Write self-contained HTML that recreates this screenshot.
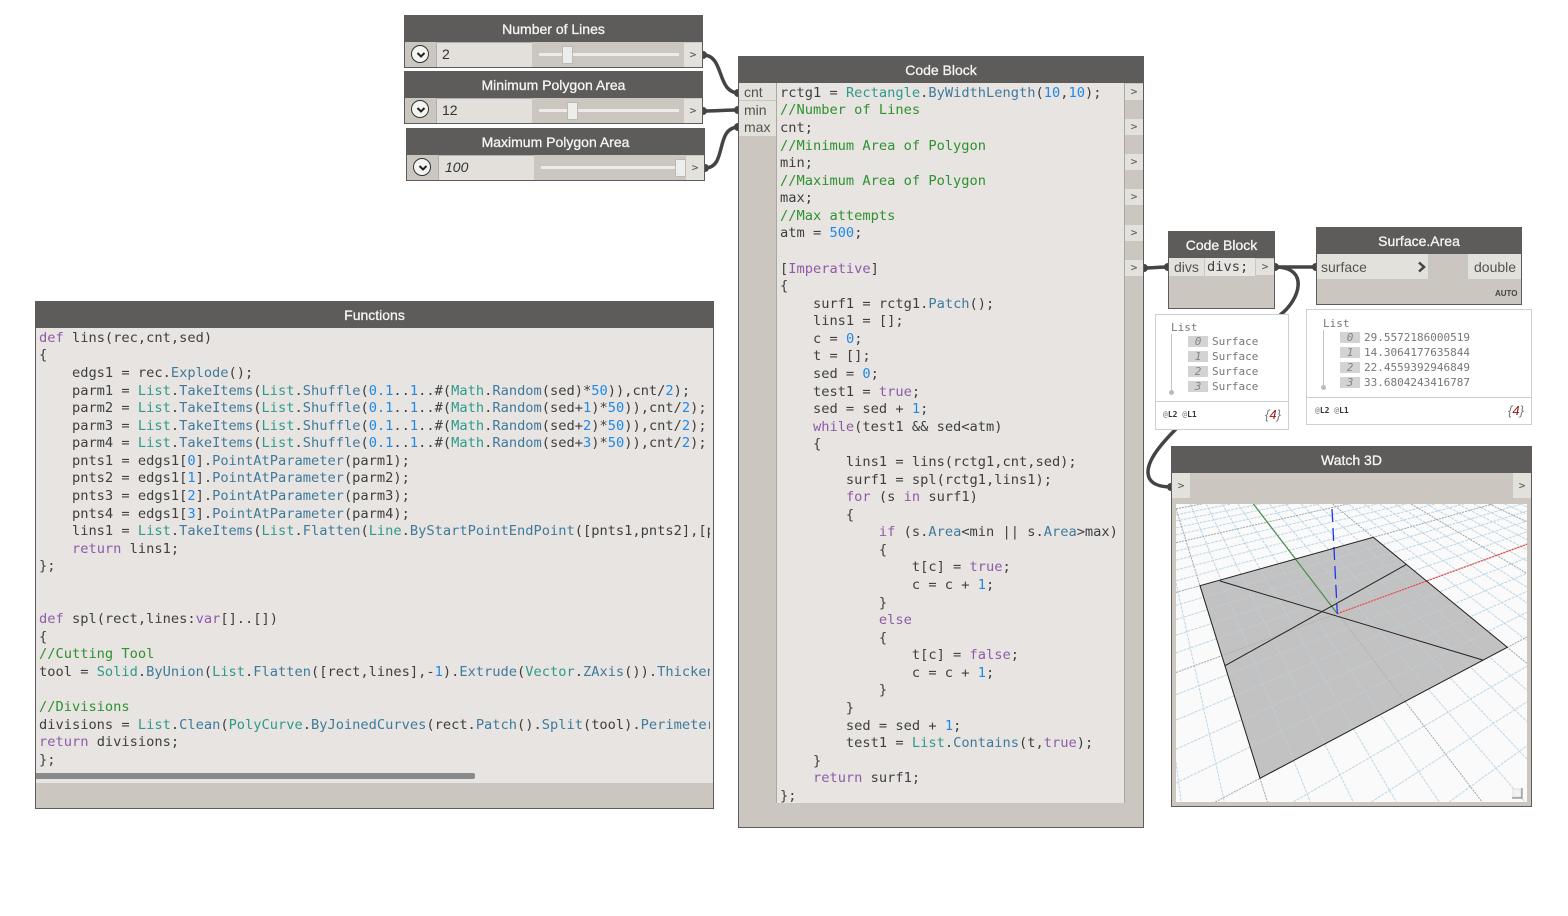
<!DOCTYPE html>
<html><head><meta charset="utf-8"><style>
html,body{margin:0;padding:0;background:#fff;width:1568px;height:916px;overflow:hidden}
body{position:relative;font-family:"Liberation Sans",sans-serif}
.a{position:absolute;box-sizing:border-box}
.node{background:#cbc7c0;border:1px solid #5e5c5a}
.hd{position:absolute;background:#5e5c5a;color:#f5f5f3;font-size:14px;text-align:center;-webkit-text-stroke:.3px #f5f5f3;line-height:29px;height:27px;overflow:hidden}
.p{position:absolute;background:#e3e1dc;color:#55534f;font-size:14px;line-height:17px;box-sizing:border-box}
.g{position:absolute;background:#e3e1dc;color:#55534f;font:11px "DejaVu Sans Mono",monospace;text-align:center;height:16px;line-height:16px;width:18px}
pre{position:absolute;margin:0;font:13.7px/17.58px "DejaVu Sans Mono",monospace;color:#3f3f3f;overflow:hidden;white-space:pre}
i{font-style:normal}
.k{color:#8f5ba8}.t{color:#2e9a8c}.m{color:#3f7a9c}.n{color:#1f88e8}.c{color:#2f9130}
.w{background:#fff;border:1px solid #cfcfcf}
.l{position:absolute;font:11px "DejaVu Sans Mono",monospace;color:#777;line-height:14px;white-space:nowrap}
.ix{position:absolute;background:#d3d3d3;width:20px;height:11px;font:italic 11px/11px "DejaVu Sans Mono",monospace;color:#858585;text-align:center}
.bold{position:absolute;font:bold 8px "DejaVu Sans Mono",monospace;color:#333;white-space:nowrap}
.four{position:absolute;font:italic 13px "Liberation Sans",sans-serif;color:#777}.four b{color:#a01515;font-weight:normal}
.circ{position:absolute;width:18px;height:18px;border:1.5px solid #333;border-radius:50%;background:#f4f4f2;box-sizing:border-box}
.track{position:absolute;height:3px;background:#ecebe8}
.th{position:absolute;width:11px;height:18px;background:#ededeb;border:1px solid #bdbab4;box-sizing:border-box}
.inp{position:absolute;background:#e3e0db;border-top:1px solid #aeb0b4;border-left:1px solid #aeb0b4;box-sizing:border-box;font-size:14px;color:#333;line-height:22px;padding-left:5px}
</style></head><body>

<svg class="a" style="left:0;top:0" width="1568" height="916" fill="none" stroke="#444" stroke-width="3.500">
<path d="M703 55C725 55 716 93 739 93"/>
<path d="M703 111C716 111 726 110 739 110"/>
<path d="M705 168C728 168 714 127 739 127"/>
<path d="M1144 268C1152 268 1160 267 1168 267"/>
<path d="M1275 267L1316 267"/>
<path d="M1275 267C1310 267 1300 300 1280 315"/>
<path d="M1176 429C1160 445 1148 460 1148 472C1148 484 1160 487 1171 487"/>
<g fill="#444" stroke="none">
<circle cx="703" cy="55" r="4"/><circle cx="703" cy="111" r="4"/><circle cx="705" cy="168" r="4"/>
<circle cx="738" cy="93" r="4"/><circle cx="738" cy="110" r="4"/><circle cx="738" cy="127" r="4"/>
<circle cx="1144" cy="268" r="4"/><circle cx="1168" cy="267" r="4"/><circle cx="1275" cy="267" r="4"/><circle cx="1316" cy="267" r="4"/><circle cx="1171" cy="487" r="4"/>
</g></svg>

<!-- sliders -->
<div class="a node" style="left:404px;top:15px;width:299px;height:53px"></div>
<div class="hd" style="left:404px;top:15px;width:299px">Number of Lines</div>
<div class="circ" style="left:411px;top:45px"></div>
<svg class="a" style="left:416px;top:51px" width="10" height="8" fill="none" stroke="#222" stroke-width="2"><path d="M1.500 2L5 5.500L8.500 2"/></svg>
<div class="inp" style="left:436px;top:42px;width:96px;height:25px">2</div>
<div class="track" style="left:539px;top:53px;width:140px"></div>
<div class="th" style="left:562px;top:46px"></div>
<div class="p" style="left:684px;top:43px;width:18px;height:24px;text-align:center;font:11px/24px 'DejaVu Sans Mono',monospace">&gt;</div>

<div class="a node" style="left:404px;top:71px;width:299px;height:53px"></div>
<div class="hd" style="left:404px;top:71px;width:299px">Minimum Polygon Area</div>
<div class="circ" style="left:411px;top:100px"></div>
<svg class="a" style="left:416px;top:106px" width="10" height="8" fill="none" stroke="#222" stroke-width="2"><path d="M1.500 2L5 5.500L8.500 2"/></svg>
<div class="inp" style="left:436px;top:98px;width:96px;height:25px">12</div>
<div class="track" style="left:539px;top:109px;width:140px"></div>
<div class="th" style="left:567px;top:102px"></div>
<div class="p" style="left:684px;top:99px;width:18px;height:24px;text-align:center;font:11px/24px 'DejaVu Sans Mono',monospace">&gt;</div>

<div class="a node" style="left:406px;top:128px;width:299px;height:53px"></div>
<div class="hd" style="left:406px;top:128px;width:299px">Maximum Polygon Area</div>
<div class="circ" style="left:413px;top:158px"></div>
<svg class="a" style="left:418px;top:164px" width="10" height="8" fill="none" stroke="#222" stroke-width="2"><path d="M1.500 2L5 5.500L8.500 2"/></svg>
<div class="inp" style="left:438px;top:155px;width:96px;height:25px;font-style:italic;padding-left:6px">100</div>
<div class="track" style="left:541px;top:166px;width:140px"></div>
<div class="th" style="left:675px;top:159px"></div>
<div class="p" style="left:686px;top:156px;width:18px;height:24px;text-align:center;font:11px/24px 'DejaVu Sans Mono',monospace">&gt;</div>

<!-- main code block -->
<div class="a node" style="left:738px;top:56px;width:406px;height:772px"></div>
<div class="hd" style="left:738px;top:56px;width:406px">Code Block</div>
<div class="a" style="left:776px;top:83px;width:349px;height:720px;background:#e7e4e1;border-left:1px solid #aaa8a3;border-right:1px solid #aaa8a3"></div>
<div class="p" style="left:739px;top:83px;width:37px;height:18px;padding-left:5px;line-height:19px;border-bottom:1px solid #cbc7c0">cnt</div>
<div class="p" style="left:739px;top:101px;width:37px;height:18px;padding-left:5px;line-height:19px">min</div>
<div class="p" style="left:739px;top:119px;width:37px;height:17px;padding-left:5px;line-height:17px">max</div>
<div class="g" style="left:1125px;top:84px">&gt;</div>
<div class="g" style="left:1125px;top:119px">&gt;</div>
<div class="g" style="left:1125px;top:154px">&gt;</div>
<div class="g" style="left:1125px;top:189px">&gt;</div>
<div class="g" style="left:1125px;top:225px">&gt;</div>
<div class="g" style="left:1125px;top:260px">&gt;</div>
<pre style="left:780px;top:84.800px;width:344px;height:718px">rctg1 = <i class="t">Rectangle</i>.<i class="m">ByWidthLength</i>(<i class="n">10</i>,<i class="n">10</i>);
<i class="c">//Number of Lines</i>
cnt;
<i class="c">//Minimum Area of Polygon</i>
min;
<i class="c">//Maximum Area of Polygon</i>
max;
<i class="c">//Max attempts</i>
atm = <i class="n">500</i>;

[<i class="k">Imperative</i>]
{
    surf1 = rctg1.<i class="m">Patch</i>();
    lins1 = [];
    c = <i class="n">0</i>;
    t = [];
    sed = <i class="n">0</i>;
    test1 = <i class="k">true</i>;
    sed = sed + <i class="n">1</i>;
    <i class="k">while</i>(test1 &amp;&amp; sed&lt;atm)
    {
        lins1 = lins(rctg1,cnt,sed);
        surf1 = spl(rctg1,lins1);
        <i class="k">for</i> (s <i class="k">in</i> surf1)
        {
            <i class="k">if</i> (s.<i class="m">Area</i>&lt;min || s.<i class="m">Area</i>&gt;max)
            {
                t[c] = <i class="k">true</i>;
                c = c + <i class="n">1</i>;
            }
            <i class="k">else</i>
            {
                t[c] = <i class="k">false</i>;
                c = c + <i class="n">1</i>;
            }
        }
        sed = sed + <i class="n">1</i>;
        test1 = <i class="t">List</i>.<i class="m">Contains</i>(t,<i class="k">true</i>);
    }
    <i class="k">return</i> surf1;
};</pre>

<!-- functions -->
<div class="a node" style="left:35px;top:301px;width:679px;height:508px"></div>
<div class="hd" style="left:35px;top:301px;width:679px">Functions</div>
<div class="a" style="left:36px;top:328px;width:677px;height:455px;background:#e7e4e1"></div>
<pre style="left:39px;top:329.800px;width:671px;height:443px">
<i class="k">def</i> lins(rec,cnt,sed)
{
    edgs1 = rec.<i class="m">Explode</i>();
    parm1 = <i class="t">List</i>.<i class="m">TakeItems</i>(<i class="t">List</i>.<i class="m">Shuffle</i>(<i class="n">0.1</i>..<i class="n">1</i>..#(<i class="t">Math</i>.<i class="m">Random</i>(sed)*<i class="n">50</i>)),cnt/<i class="n">2</i>);
    parm2 = <i class="t">List</i>.<i class="m">TakeItems</i>(<i class="t">List</i>.<i class="m">Shuffle</i>(<i class="n">0.1</i>..<i class="n">1</i>..#(<i class="t">Math</i>.<i class="m">Random</i>(sed+<i class="n">1</i>)*<i class="n">50</i>)),cnt/<i class="n">2</i>);
    parm3 = <i class="t">List</i>.<i class="m">TakeItems</i>(<i class="t">List</i>.<i class="m">Shuffle</i>(<i class="n">0.1</i>..<i class="n">1</i>..#(<i class="t">Math</i>.<i class="m">Random</i>(sed+<i class="n">2</i>)*<i class="n">50</i>)),cnt/<i class="n">2</i>);
    parm4 = <i class="t">List</i>.<i class="m">TakeItems</i>(<i class="t">List</i>.<i class="m">Shuffle</i>(<i class="n">0.1</i>..<i class="n">1</i>..#(<i class="t">Math</i>.<i class="m">Random</i>(sed+<i class="n">3</i>)*<i class="n">50</i>)),cnt/<i class="n">2</i>);
    pnts1 = edgs1[<i class="n">0</i>].<i class="m">PointAtParameter</i>(parm1);
    pnts2 = edgs1[<i class="n">1</i>].<i class="m">PointAtParameter</i>(parm2);
    pnts3 = edgs1[<i class="n">2</i>].<i class="m">PointAtParameter</i>(parm3);
    pnts4 = edgs1[<i class="n">3</i>].<i class="m">PointAtParameter</i>(parm4);
    lins1 = <i class="t">List</i>.<i class="m">TakeItems</i>(<i class="t">List</i>.<i class="m">Flatten</i>(<i class="t">Line</i>.<i class="m">ByStartPointEndPoint</i>([pnts1,pnts2],[pnts3,pnts4]),cnt);
    <i class="k">return</i> lins1;
};


<i class="k">def</i> spl(rect,lines:<i class="k">var</i>[]..[])
{
<i class="c">//Cutting Tool</i>
tool = <i class="t">Solid</i>.<i class="m">ByUnion</i>(<i class="t">List</i>.<i class="m">Flatten</i>([rect,lines],-<i class="n">1</i>).<i class="m">Extrude</i>(<i class="t">Vector</i>.<i class="m">ZAxis</i>()).<i class="m">Thicken</i>(<i class="n">0.01</i>));

<i class="c">//Divisions</i>
divisions = <i class="t">List</i>.<i class="m">Clean</i>(<i class="t">PolyCurve</i>.<i class="m">ByJoinedCurves</i>(rect.<i class="m">Patch</i>().<i class="m">Split</i>(tool).<i class="m">PerimeterCurves</i>()),<i class="k">false</i>);
<i class="k">return</i> divisions;
};</pre>
<div class="a" style="left:36px;top:773px;width:439px;height:6px;background:#8a8a8a;border-radius:0 2px 2px 0"></div>

<!-- small code block -->
<div class="a node" style="left:1168px;top:231px;width:107px;height:78px"></div>
<div class="hd" style="left:1168px;top:231px;width:107px">Code Block</div>
<div class="p" style="left:1169px;top:258px;width:35px;height:18px;padding-left:5px;line-height:19px">divs</div>
<pre style="left:1205px;top:258px;width:50px;height:18px;background:#e7e4e1;line-height:18px;padding-left:2px;box-sizing:border-box">divs;</pre>
<div class="g" style="left:1256px;top:259px">&gt;</div>

<!-- surface area -->
<div class="a node" style="left:1316px;top:227px;width:206px;height:78px"></div>
<div class="hd" style="left:1316px;top:227px;width:206px">Surface.Area</div>
<div class="p" style="left:1317px;top:254px;width:111px;height:25px;padding-left:4px;line-height:27px">surface</div>
<svg class="a" style="left:1417px;top:261px" width="10" height="12" fill="none" stroke="#444" stroke-width="2.500"><path d="M2 1.500L7 6L2 10.500"/></svg>
<div class="p" style="left:1468px;top:254px;width:53px;height:25px;padding-left:6px;line-height:27px">double</div>
<div class="a" style="left:1495px;top:289px;font:bold 8px 'Liberation Sans',sans-serif;color:#444">AUTO</div>

<!-- watch 1 -->
<div class="a w" style="left:1155px;top:314px;width:134px;height:116px">
<div class="a" style="left:0;top:86px;width:132px;height:1px;background:#cfcfcf"></div></div>
<div class="l" style="left:1171px;top:321px">List</div>
<div class="a" style="left:1171px;top:334px;width:1px;height:57px;background:#c4c4c4"></div>
<div class="a" style="left:1169px;top:390px;width:5px;height:5px;border-radius:50%;background:#bbb"></div>
<div class="ix" style="left:1188px;top:336px">0</div><div class="l" style="left:1212px;top:335px">Surface</div>
<div class="ix" style="left:1188px;top:351px">1</div><div class="l" style="left:1212px;top:350px">Surface</div>
<div class="ix" style="left:1188px;top:366px">2</div><div class="l" style="left:1212px;top:365px">Surface</div>
<div class="ix" style="left:1188px;top:381px">3</div><div class="l" style="left:1212px;top:380px">Surface</div>
<div class="bold" style="left:1163px;top:410px"><span style="color:#999">@</span>L2 <span style="color:#999">@</span>L1</div>
<div class="four" style="left:1265px;top:407px">{<b>4</b>}</div>

<!-- watch 2 -->
<div class="a w" style="left:1306px;top:309px;width:226px;height:116px">
<div class="a" style="left:0;top:87px;width:224px;height:1px;background:#cfcfcf"></div></div>
<div class="l" style="left:1323px;top:317px">List</div>
<div class="a" style="left:1323px;top:330px;width:1px;height:57px;background:#c4c4c4"></div>
<div class="a" style="left:1321px;top:385px;width:5px;height:5px;border-radius:50%;background:#bbb"></div>
<div class="ix" style="left:1340px;top:332px">0</div><div class="l" style="left:1364px;top:331px">29.5572186000519</div>
<div class="ix" style="left:1340px;top:347px">1</div><div class="l" style="left:1364px;top:346px">14.3064177635844</div>
<div class="ix" style="left:1340px;top:362px">2</div><div class="l" style="left:1364px;top:361px">22.4559392946849</div>
<div class="ix" style="left:1340px;top:377px">3</div><div class="l" style="left:1364px;top:376px">33.6804243416787</div>
<div class="bold" style="left:1315px;top:406px"><span style="color:#999">@</span>L2 <span style="color:#999">@</span>L1</div>
<div class="four" style="left:1508px;top:403px">{<b>4</b>}</div>

<!-- watch 3d -->
<div class="a node" style="left:1171px;top:446px;width:361px;height:361px"></div>
<div class="hd" style="left:1171px;top:446px;width:361px">Watch 3D</div>
<div class="g" style="left:1172px;top:473px;height:25px;line-height:25px">&gt;</div>
<div class="g" style="left:1513px;top:473px;height:25px;line-height:25px">&gt;</div>
<svg class="a" id="v" style="left:1176px;top:504px;background:#fafafa" width="351" height="298" viewBox="1176 504 351 298">
<defs><clipPath id="q"><polygon points="1200,585.700 1373.300,537.300 1507.300,647.300 1260,778.300"/></clipPath></defs>
<g id="gr" fill="none"></g>
<polygon points="1200,585.700 1373.300,537.300 1507.300,647.300 1260,778.300" fill="#c2c2c2"/>
<g id="gr2" fill="none" opacity=".55" clip-path="url(#q)"></g>
<path d="M1337.300 613.700L1527.300 544.300" stroke="#f33" stroke-width="1" stroke-dasharray="2 1" fill="none"/>
<path d="M1337.300 613.700L1253.300 504" stroke="#3a8a3a" stroke-width="1" fill="none"/>
<path d="M1332 509L1337.300 613.700" stroke="#2233ee" stroke-width="1.300" stroke-dasharray="13 6" fill="none"/>
<g fill="none" stroke="#222" stroke-width="1">
<polygon points="1200,585.700 1373.300,537.300 1507.300,647.300 1260,778.300"/>
<path d="M1220 581L1482.700 660"/><path d="M1225 665.700L1406 564.700"/>
</g>
<rect x="1513" y="789" width="8" height="8" fill="#f2f2f2" stroke="#ddd" stroke-width="1"/>
<path d="M1512 798h10v-10" fill="none" stroke="#777" stroke-width="1"/>
</svg>
<script>
(function(){
var P=[[1200,585.7],[1373.3,537.3],[1507.3,647.3],[1260,778.3]];
var x0=P[0][0],y0=P[0][1],x1=P[1][0],y1=P[1][1],x2=P[2][0],y2=P[2][1],x3=P[3][0],y3=P[3][1];
var dx1=x1-x2,dx2=x3-x2,sx=x0-x1+x2-x3,dy1=y1-y2,dy2=y3-y2,sy=y0-y1+y2-y3;
var den=dx1*dy2-dx2*dy1,g=(sx*dy2-dx2*sy)/den,h=(dx1*sy-sx*dy1)/den;
var a=x1-x0+g*x1,b=x3-x0+h*x3,c=x0,d=y1-y0+g*y1,e=y3-y0+h*y3,f=y0;
function m(u,v){var w=g*u+h*v+1;return [(a*u+b*v+c)/w,(d*u+e*v+f)/w];}
var L=1176,R=1527,T=504,B=802;
function seg(A,Q,st){
  var t0=0,t1=1,dx=Q[0]-A[0],dy=Q[1]-A[1];
  var ps=[-dx,dx,-dy,dy],qs=[A[0]-L,R-A[0],A[1]-T,B-A[1]];
  for(var i=0;i<4;i++){
    if(ps[i]==0){if(qs[i]<0)return '';continue;}
    var r=qs[i]/ps[i];
    if(ps[i]<0){if(r>t1)return '';if(r>t0)t0=r;}
    else{if(r<t0)return '';if(r<t1)t1=r;}
  }
  return '<path d="M'+(A[0]+t0*dx).toFixed(1)+' '+(A[1]+t0*dy).toFixed(1)+'L'+(A[0]+t1*dx).toFixed(1)+' '+(A[1]+t1*dy).toFixed(1)+'" '+st+'/>';
}
var s='',W=0.1,minor='stroke="#bcd6e6" stroke-width="1" stroke-dasharray="3 1"',major='stroke="#9aa6ad" stroke-width="1" stroke-dasharray="2 1"';
var lines=[];
for(var i=-30;i<=30;i++){
  var t=i/10,maj=(i%5==0),st=maj?major:minor;
  var vhi=Math.min(4,(1-W+g*t)/(-h)),vlo=-4;
  var uhi=4,ulo=Math.max(-4,(W-1-h*t)/g);
  if(vhi>vlo)lines.push([m(t,vlo),m(t,vhi),st,maj]);
  if(uhi>ulo)lines.push([m(ulo,t),m(uhi,t),st,maj]);
}
lines.sort(function(p,q){return p[3]-q[3];});
lines.forEach(function(l){s+=seg(l[0],l[1],l[2]);});
document.getElementById('gr').innerHTML=s;
document.getElementById('gr2').innerHTML=s;
})();
</script>
</body></html>
